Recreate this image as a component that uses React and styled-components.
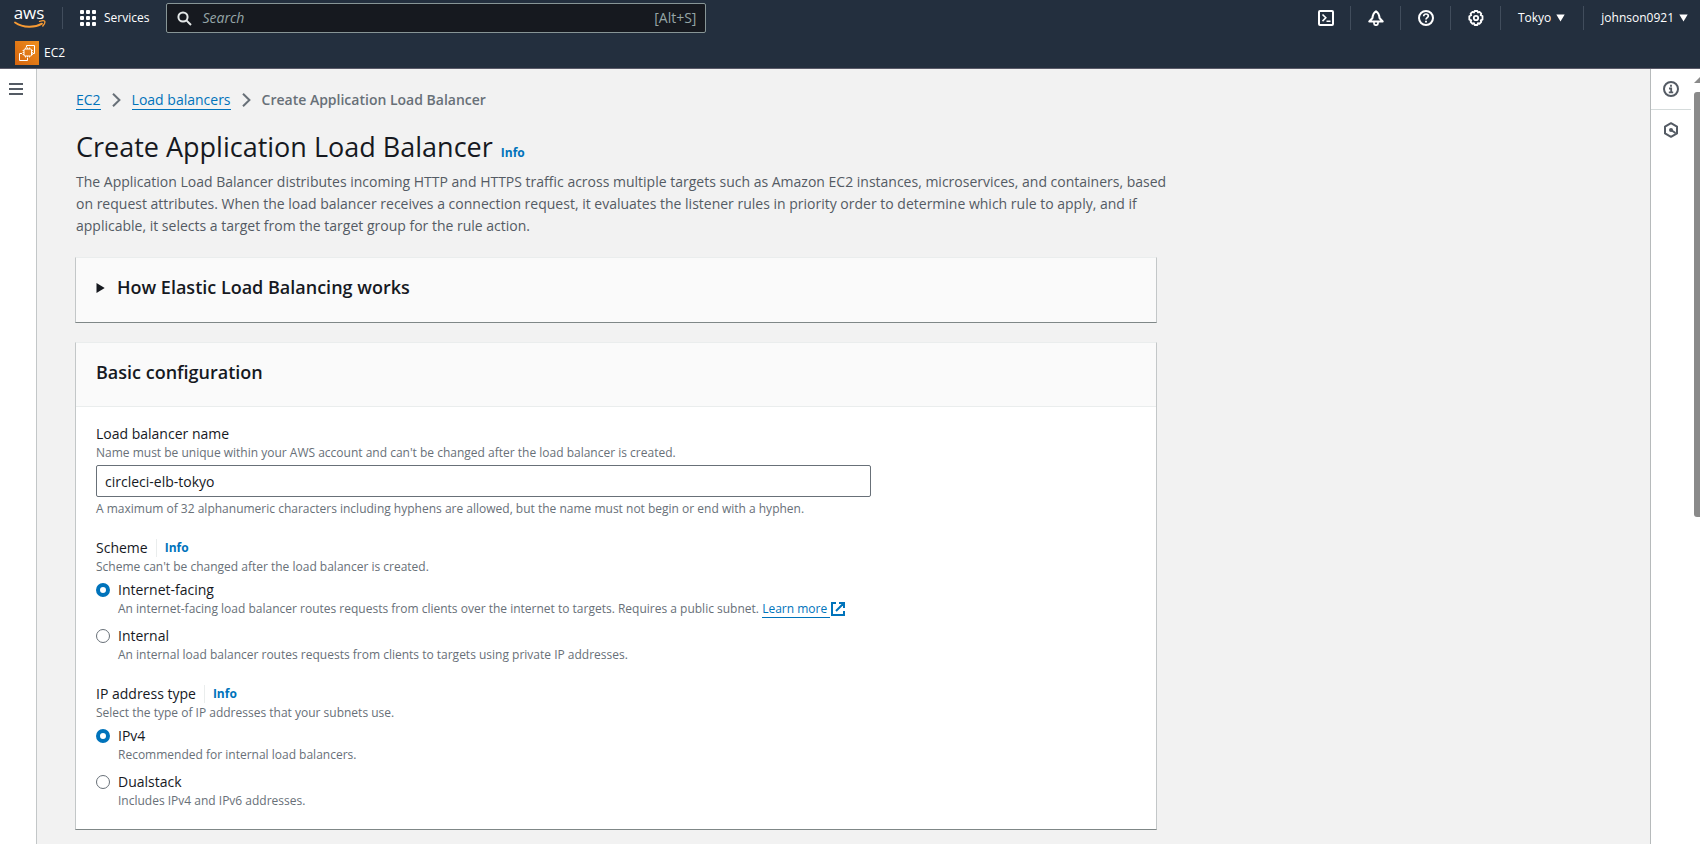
import React, { useState } from "react";
import styled, { createGlobalStyle, css } from "styled-components";

const GlobalStyle = createGlobalStyle`
  *, *::before, *::after { box-sizing: border-box; }
  body {
    margin: 0;
    background: #f2f2f2;
    color: #16191f;
    font-family: "Open Sans", "Noto Sans", sans-serif;
    font-size: 14px;
    line-height: 22px;
  }
  h1, h2, p, ol, fieldset { margin: 0; padding: 0; border: 0; }
  button, input { font: inherit; color: inherit; }
  button { display: block; padding: 0; border: 0; background: none; cursor: pointer; }
  svg { display: block; flex: none; }
`;

const Page = styled.div`
  display: flex;
  flex-direction: column;
  min-height: 100vh;
`;

/* ---------- top navigation ---------- */

const Header = styled.header`
  background: #232f3e;
  border-bottom: 1px solid #5a5a68;
  color: #fff;
  font-size: 12px;
  line-height: 16px;
`;

const NavBar = styled.nav`
  display: flex;
  align-items: center;
  height: 36px;
  padding-left: 14px;
`;

const LogoLink = styled.a`
  display: flex;
  padding-right: 16px;
  color: #fff;
`;

const ServicesButton = styled.button`
  display: flex;
  align-items: center;
  gap: 8px;
  height: 22px;
  padding: 0 17px;
  border-left: 1px solid #414d5c;
  font-weight: 500;
`;

const SearchBox = styled.label`
  display: flex;
  align-items: center;
  gap: 10px;
  flex: 0 1 540px;
  height: 30px;
  padding: 0 9px 0 10px;
  border: 1px solid #879596;
  border-radius: 2px;
  background: #16191f;
  color: #95a5a6;
  font-size: 14px;
`;

const SearchInput = styled.input`
  flex: 1;
  min-width: 0;
  padding: 0;
  border: 0;
  outline: 0;
  background: transparent;
  color: #fff;
  &::placeholder { color: #95a5a6; font-style: italic; opacity: 1; }
`;

const NavActions = styled.div`
  display: flex;
  align-items: center;
  margin-left: auto;
`;

const NavButton = styled.button`
  display: flex;
  align-items: center;
  gap: 5px;
  height: 24px;
  padding: 0 ${(p) => p.$end || 16}px 0 17px;
  border-left: 1px solid ${(p) => (p.$first ? "transparent" : "#414d5c")};
  font-weight: 500;
`;

const FavoritesBar = styled.div`
  display: flex;
  height: 32px;
  padding: 5px 15px 3px;
`;

const Favorite = styled.a`
  display: flex;
  align-items: center;
  gap: 5px;
  color: #fff;
  text-decoration: none;
  font-weight: 500;
`;

/* ---------- page frame ---------- */

const Body = styled.div`
  display: flex;
  flex: 1;
`;

const LeftRail = styled.aside`
  flex: 0 0 37px;
  padding: 14px 0 0 9px;
  border-right: 1px solid #c3c7c8;
  background: #fff;
`;

const RightRail = styled.aside`
  display: flex;
  flex: 0 0 50px;
  min-width: 0;
  border-left: 1px solid #b6babb;
  background: #fff;
`;

const RailTools = styled.div`
  flex: 0 0 40px;
`;

const RailButton = styled.button`
  display: flex;
  align-items: center;
  justify-content: center;
  width: 100%;
  height: 41px;
  border-bottom: 1px solid ${(p) => (p.$divided ? "#d5dbdb" : "transparent")};
`;

const ScrollTrack = styled.div`
  flex: 1;
  min-width: 0;
  padding: 8px 0 0 3px;
  overflow: hidden;
`;

const ScrollThumb = styled.div`
  height: 425px;
  margin-top: 9px;
  border-radius: 3px 0 0 3px;
  background: #8a8a8a;
`;

const Main = styled.main`
  flex: 1;
  min-width: 0;
  padding: 20px 38px 12px;
`;

const Intro = styled.div`
  max-width: 1100px;
`;

const CardStack = styled.div`
  display: flex;
  flex-direction: column;
  gap: 19px;
  max-width: 1082px;
`;

/* ---------- heading ---------- */

const Breadcrumbs = styled.ol`
  display: flex;
  align-items: center;
  list-style: none;
  padding-left: 1px;
`;

const Crumb = styled.li`
  display: flex;
  align-items: center;
  color: #687078;
  font-weight: ${(p) => (p.$current ? 600 : 400)};
  & > svg { margin: 0 11px; }
`;

const TextLink = styled.a`
  color: #0073bb;
  text-decoration: none;
  border-bottom: 1px solid #0073bb;
  line-height: 18px;
`;

const TitleRow = styled.div`
  display: flex;
  align-items: baseline;
  gap: 8px;
  padding: 18px 0 0 1px;
`;

const Title = styled.h1`
  font-size: 27px;
  line-height: 36px;
  font-weight: 400;
`;

const InfoLink = styled.a`
  color: #0073bb;
  font-size: 12px;
  line-height: 16px;
  font-weight: 700;
  text-decoration: none;
`;

const Description = styled.p`
  padding: 6px 0 20px 1px;
  color: #545b64;
`;

/* ---------- cards ---------- */

const Card = styled.section`
  border: 1px solid #c3c7c8;
  border-top-color: #eaeded;
  border-bottom-color: #7f8787;
  background: #fff;
`;

const CardHeader = styled.div`
  padding: 17px 20px 21px;
  background: #fafafa;
  border-bottom: 1px solid ${(p) => (p.$divided ? "#eaeded" : "transparent")};
`;

const CardTitle = styled.h2`
  font-size: 18px;
  line-height: 25px;
  font-weight: 600;
`;

const ExpandButton = styled.button`
  display: flex;
  align-items: center;
  gap: 12px;
`;

const CardBody = styled.div`
  display: flex;
  flex-direction: column;
  gap: 20px;
  padding: 16px 20px 20px;
`;

/* ---------- form ---------- */

const labelText = css`
  font-size: 14px;
  line-height: 22px;
`;

const Label = styled.label`
  display: block;
  ${labelText}
`;

const Legend = styled.legend`
  display: flex;
  align-items: center;
  gap: 8px;
  padding: 0;
  ${labelText}
`;

const Divider = styled.span`
  width: 1px;
  height: 18px;
  background: #eaeded;
`;

const Hint = styled.p`
  color: #687078;
  font-size: 12px;
  line-height: 16px;
`;

const NameInput = styled.input`
  display: block;
  width: 100%;
  max-width: 775px;
  height: 32px;
  margin: 4px 0;
  padding: 0 8px;
  border: 1px solid #687078;
  border-radius: 2px;
  background: #fff;
`;

const Options = styled.div`
  display: flex;
  flex-direction: column;
  gap: 8px;
  padding-top: 4px;
`;

const Option = styled.div`
  display: grid;
  grid-template-columns: 14px 1fr;
  column-gap: 8px;
  align-items: center;
  & > ${Hint} { grid-column: 2; }
`;

const Radio = styled.input`
  appearance: none;
  width: 14px;
  height: 14px;
  margin: 0;
  border: 1px solid #687078;
  border-radius: 50%;
  background: #fff;
  &:checked { border: 4px solid #0073bb; }
`;

const ExternalLink = styled.a`
  display: inline-flex;
  gap: 1px;
  vertical-align: top;
  color: #0073bb;
  text-decoration: none;
`;

const ExternalText = styled.span`
  padding-right: 3px;
  box-shadow: 0 1px 0 #0073bb;
`;

/* ---------- drawings ---------- */

const AwsLogo = () => (
  <svg width="32" height="36" viewBox="0 0 32 36" role="img" aria-label="AWS">
    <text x="15" y="19" textAnchor="middle" fontFamily="Open Sans" fontSize="17" fontWeight="500" fill="#fff">aws</text>
    <path d="M1 22.400c8.500 5.600 19.500 5.600 27 1.200" fill="none" stroke="#f79b34" strokeWidth="1.800" strokeLinecap="round" />
    <path d="M25.600 21.400c2-.7 4.500-.9 5-.3.500.7-.3 3.200-1.800 4.900" fill="none" stroke="#f79b34" strokeWidth="1.400" strokeLinecap="round" />
  </svg>
);

const GridIcon = () => (
  <svg width="16" height="16" viewBox="0 0 16 16" fill="#fff">
    {[0, 6, 12].map((y) => [0, 6, 12].map((x) => <rect key={`${x}-${y}`} x={x} y={y} width="4" height="4" rx="1" />))}
  </svg>
);

const SearchIcon = () => (
  <svg width="15" height="15" viewBox="0 0 15 15" fill="none" stroke="#e4e8e8" strokeWidth="2">
    <circle cx="6" cy="6" r="4.600" />
    <path d="M9.400 9.400 14 14" />
  </svg>
);

const Ec2Icon = () => (
  <svg width="24" height="24" viewBox="0 0 24 24" fill="none" stroke="#fff">
    <defs>
      <linearGradient id="ec2" x1="0" y1="1" x2="1" y2="0">
        <stop offset="0" stopColor="#d4640f" />
        <stop offset="1" stopColor="#ee8f1e" />
      </linearGradient>
    </defs>
    <rect width="24" height="24" fill="url(#ec2)" stroke="none" />
    <path d="M11.500 6.500v-2h8v8h-2M7 12.500H4.500v7h8V17" />
    <rect x="9" y="8" width="7.500" height="7" rx="1" />
    <path d="M10.500 6.500V8M12.500 6.500V8M14.500 6.500V8M10.500 15v1.500M12.500 15v1.500M14.500 15v1.500M7.500 9.500H9M7.500 11.500H9M7.500 13.500H9M16.500 9.500H18M16.500 11.500H18M16.500 13.500H18" strokeWidth=".8" />
  </svg>
);

const line = { width: 16, height: 16, viewBox: "0 0 16 16", fill: "none", stroke: "#fff", strokeWidth: 2 };

const TerminalIcon = () => (
  <svg {...line}>
    <rect x="1" y="1" width="14" height="14" rx="1" />
    <path d="m4.500 4.500 3.300 3.300-3.300 3.300M8.500 11.300h4" strokeWidth="1.600" />
  </svg>
);

const BellIcon = () => (
  <svg {...line}>
    <path d="M8 1.300C5.800 2.600 4.700 4.700 4.500 8L1.300 11.500h13.400L11.500 8C11.300 4.700 10.200 2.600 8 1.300Z" strokeLinejoin="round" />
    <path d="M6 12v1.200a2 2 0 0 0 4 0V12" strokeWidth="1.700" />
  </svg>
);

const HelpIcon = () => (
  <svg {...line}>
    <circle cx="8" cy="8" r="7" />
    <path d="M5.700 6.300C5.700 4.800 6.700 4 8 4s2.300.8 2.300 2c0 1.700-2.300 1.700-2.300 3.600" strokeWidth="1.700" />
    <path d="M8 10.800v1.700" strokeWidth="1.900" />
  </svg>
);

const GearIcon = () => (
  <svg {...line}>
    <path d="M6.600 1h2.800l.6 1.500 1.500-.6 1.800 1.800-.6 1.500 1.800.8v3.600l-1.800.8.600 1.500-1.900 1.900-1.500-.6L9.400 15H6.600L6 13.200l-1.500.6-1.900-1.900.7-1.500L1.300 9.600V6.200l1.900-.9-.6-1.600 1.900-1.800 1.500.6Z" strokeLinejoin="round" strokeWidth="1.800" />
    <circle cx="8" cy="8" r="2.200" strokeWidth="1.800" />
  </svg>
);

const CaretIcon = () => (
  <svg width="9" height="8" viewBox="0 0 9 8" fill="#fff"><path d="M.3.500h8.400L4.500 7.500Z" /></svg>
);

const MenuIcon = () => (
  <svg width="14" height="12" viewBox="0 0 14 12" stroke="#545b64" strokeWidth="2"><path d="M0 1h14M0 6h14M0 11h14" /></svg>
);

const InfoIcon = () => (
  <svg {...line} stroke="#545b64">
    <circle cx="8" cy="8" r="7" />
    <path d="M8 3.700v2M6 7.500h2.200V11M5.800 11.300h4.400" strokeWidth="1.800" />
  </svg>
);

const HexagonIcon = () => (
  <svg {...line} stroke="#545b64">
    <path d="M8 1.200 14 4.600v6.800L8 14.800 2 11.400V4.600Z" strokeLinejoin="round" />
    <path d="m8 8 4.500 3" />
    <circle cx="8" cy="8" r="2" fill="#545b64" stroke="none" />
  </svg>
);

const ChevronIcon = () => (
  <svg width="9" height="14" viewBox="0 0 9 14" fill="none" stroke="#687078" strokeWidth="2"><path d="m1 .8 6.400 6.200L1 13.200" /></svg>
);

const ExpandIcon = () => (
  <svg width="9" height="10" viewBox="0 0 9 10" fill="#16191f"><path d="M.500 0v10L8.700 5Z" /></svg>
);

const ExternalIcon = () => (
  <svg width="14" height="16" viewBox="0 0 14 16" fill="none" stroke="#0073bb" strokeWidth="2">
    <path d="M5 2H1v12h12v-4M8 2h5v5M13 2 5 10" />
  </svg>
);

const ScrollArrow = () => (
  <svg width="12" height="6" viewBox="0 0 12 6" fill="#8a8a8a"><path d="M0 6 6 0l6 6Z" /></svg>
);

/* ---------- data ---------- */

const SCHEMES = [
  {
    value: "internet-facing",
    label: "Internet-facing",
    hint: "An internet-facing load balancer routes requests from clients over the internet to targets. Requires a public subnet.",
    link: "Learn more",
  },
  {
    value: "internal",
    label: "Internal",
    hint: "An internal load balancer routes requests from clients to targets using private IP addresses.",
  },
];

const IP_TYPES = [
  { value: "ipv4", label: "IPv4", hint: "Recommended for internal load balancers." },
  { value: "dualstack", label: "Dualstack", hint: "Includes IPv4 and IPv6 addresses." },
];

function RadioField({ name, legend, hint, options }) {
  const [value, setValue] = useState(options[0].value);
  return (
    <fieldset>
      <Legend>
        {legend}
        <Divider />
        <InfoLink href="#info">Info</InfoLink>
      </Legend>
      <Hint>{hint}</Hint>
      <Options>
        {options.map((o) => (
          <Option key={o.value}>
            <Radio
              type="radio"
              id={o.value}
              name={name}
              checked={value === o.value}
              onChange={() => setValue(o.value)}
            />
            <Label htmlFor={o.value}>{o.label}</Label>
            <Hint>
              {o.hint}
              {o.link && (
                <>
                  {" "}
                  <ExternalLink href="#learn-more">
                    <ExternalText>{o.link}</ExternalText>
                    <ExternalIcon />
                  </ExternalLink>
                </>
              )}
            </Hint>
          </Option>
        ))}
      </Options>
    </fieldset>
  );
}

export default function App() {
  const [name, setName] = useState("circleci-elb-tokyo");
  return (
    <Page>
      <GlobalStyle />
      <Header>
        <NavBar>
          <LogoLink href="#home"><AwsLogo /></LogoLink>
          <ServicesButton><GridIcon />Services</ServicesButton>
          <SearchBox>
            <SearchIcon />
            <SearchInput type="text" placeholder="Search" aria-label="Search" />
            <span>[Alt+S]</span>
          </SearchBox>
          <NavActions>
            <NavButton $first aria-label="CloudShell"><TerminalIcon /></NavButton>
            <NavButton aria-label="Notifications"><BellIcon /></NavButton>
            <NavButton aria-label="Help"><HelpIcon /></NavButton>
            <NavButton aria-label="Settings"><GearIcon /></NavButton>
            <NavButton $end={18}>Tokyo<CaretIcon /></NavButton>
            <NavButton $end={12}>johnson0921<CaretIcon /></NavButton>
          </NavActions>
        </NavBar>
        <FavoritesBar>
          <Favorite href="#ec2"><Ec2Icon />EC2</Favorite>
        </FavoritesBar>
      </Header>

      <Body>
        <LeftRail>
          <button aria-label="Open navigation"><MenuIcon /></button>
        </LeftRail>

        <Main>
          <Intro>
            <nav aria-label="Breadcrumbs">
              <Breadcrumbs>
                <Crumb><TextLink href="#ec2">EC2</TextLink><ChevronIcon /></Crumb>
                <Crumb><TextLink href="#load-balancers">Load balancers</TextLink><ChevronIcon /></Crumb>
                <Crumb $current>Create Application Load Balancer</Crumb>
              </Breadcrumbs>
            </nav>

            <TitleRow>
              <Title>Create Application Load Balancer</Title>
              <InfoLink href="#info">Info</InfoLink>
            </TitleRow>
            <Description>
              The Application Load Balancer distributes incoming HTTP and HTTPS traffic across multiple targets such as
              Amazon EC2 instances, microservices, and containers, based on request attributes. When the load balancer
              receives a connection request, it evaluates the listener rules in priority order to determine which rule to
              apply, and if applicable, it selects a target from the target group for the rule action.
            </Description>
          </Intro>

          <CardStack>
            <Card>
              <CardHeader>
                <CardTitle>
                  <ExpandButton aria-expanded="false"><ExpandIcon />How Elastic Load Balancing works</ExpandButton>
                </CardTitle>
              </CardHeader>
            </Card>

            <Card>
              <CardHeader $divided>
                <CardTitle>Basic configuration</CardTitle>
              </CardHeader>
              <CardBody>
                <div>
                  <Label htmlFor="lb-name">Load balancer name</Label>
                  <Hint>Name must be unique within your AWS account and can't be changed after the load balancer is created.</Hint>
                  <NameInput id="lb-name" type="text" value={name} onChange={(e) => setName(e.target.value)} />
                  <Hint>A maximum of 32 alphanumeric characters including hyphens are allowed, but the name must not begin or end with a hyphen.</Hint>
                </div>
                <RadioField
                  name="scheme"
                  legend="Scheme"
                  hint="Scheme can't be changed after the load balancer is created."
                  options={SCHEMES}
                />
                <RadioField
                  name="ip-type"
                  legend="IP address type"
                  hint="Select the type of IP addresses that your subnets use."
                  options={IP_TYPES}
                />
              </CardBody>
            </Card>
          </CardStack>
        </Main>

        <RightRail>
          <RailTools>
            <RailButton $divided aria-label="Info panel"><InfoIcon /></RailButton>
            <RailButton aria-label="Shortcuts"><HexagonIcon /></RailButton>
          </RailTools>
          <ScrollTrack>
            <ScrollArrow />
            <ScrollThumb />
          </ScrollTrack>
        </RightRail>
      </Body>
    </Page>
  );
}
